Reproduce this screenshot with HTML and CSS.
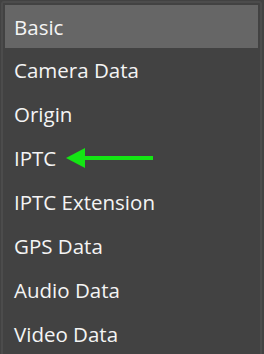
FILE: index.html
```html
<!DOCTYPE html>
<html lang="en">
<head>
  <meta charset="UTF-8">
  <title>Metadata</title>
  <link rel="stylesheet" href="styles.css">
</head>
<body>
  <div class="menu">
    <div class="item selected">Basic</div>
    <div class="item">Camera Data</div>
    <div class="item">Origin</div>
    <div class="item">IPTC
      <svg class="arrow" width="90" height="22" viewBox="0 0 90 22">
        <polygon points="0,11 19,1 19,21" fill="#14e614"/>
        <rect x="17" y="9" width="70" height="4" fill="#14e614"/>
      </svg>
    </div>
    <div class="item">IPTC Extension</div>
    <div class="item">GPS Data</div>
    <div class="item">Audio Data</div>
    <div class="item">Video Data</div>
  </div>
</body>
</html>
```

FILE: styles.css
```css
body {
  margin: 0;
  background-color: #424242;
  font-family: "Open Sans", sans-serif;
  color: #f4f4f4;
}
.menu {
  margin: 1px 2px 0 1px;
  border: 2px solid #4c4c4c;
  border-bottom: none;
  border-radius: 3px 3px 0 0;
  padding: 2px 2px 0 2px;
  height: 353px;
  box-sizing: border-box;
  overflow: hidden;
}
.item {
  height: 44px;
  line-height: 44px;
  padding-left: 9px;
  font-size: 20.5px;
  font-weight: 500;
  display: flex;
  align-items: center;
  white-space: nowrap;
}
.selected {
  background-color: #666666;
  height: 43px;
}
.arrow {
  margin-left: 10px;
}
```
